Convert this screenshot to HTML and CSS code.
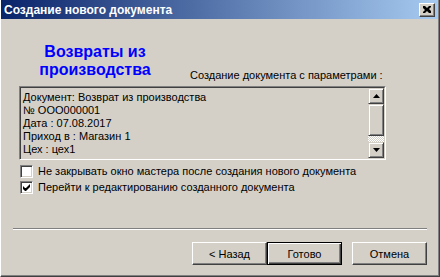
FILE: index.html
```html
<!DOCTYPE html>
<html lang="ru">
<head>
<meta charset="utf-8">
<title>Создание нового документа</title>
<link rel="stylesheet" href="styles.css">
</head>
<body>
<div class="window">
  <div class="titlebar">
    <span class="title">Создание нового документа</span>
    <span class="close-btn">
      <svg width="8" height="7" viewBox="0 0 8 7"><path d="M0 0h2l2 2 2-2h2v1l-2 2 2 2v2h-2l-2-2-2 2h-2v-1l2-2-2-2z" fill="#000"/></svg>
    </span>
  </div>
  <div class="content">
    <div class="top-row">
      <div class="heading">Возвраты из<br>производства</div>
      <div class="params-label">Создание документа с параметрами :</div>
    </div>
    <div class="memo">
      <div class="memo-text">
        <div>Документ: Возврат из производства</div>
        <div>№ ООО000001</div>
        <div>Дата : 07.08.2017</div>
        <div>Приход в : Магазин 1</div>
        <div>Цех : цех1</div>
      </div>
      <div class="scrollbar">
        <div class="sb-btn"><svg width="7" height="4" viewBox="0 0 7 4"><path d="M3.5 0L7 4H0z" fill="#000"/></svg></div>
        <div class="sb-thumb"></div>
        <div class="sb-track"></div>
        <div class="sb-btn"><svg width="7" height="4" viewBox="0 0 7 4"><path d="M0 0H7L3.5 4z" fill="#000"/></svg></div>
      </div>
    </div>
    <div class="checks">
      <label class="check-row"><span class="checkbox"></span><span>Не закрывать окно мастера после создания нового документа</span></label>
      <label class="check-row"><span class="checkbox"><svg width="9" height="9" viewBox="0 0 9 9"><path d="M1 3v3l2 2h1l4-4v-3l-4 4h-1z" fill="#000"/></svg></span><span>Перейти к редактированию созданного документа</span></label>
    </div>
    <div class="separator"></div>
    <div class="buttons">
      <button class="btn">&lt; Назад</button>
      <button class="btn btn-default">Готово</button>
      <button class="btn btn-gap">Отмена</button>
    </div>
  </div>
</div>
</body>
</html>
```
FILE: styles.css
```css
html, body {
  margin: 0;
  padding: 0;
  background: #d4d0c8;
}
body {
  font-family: "Liberation Sans", Arial, sans-serif;
  font-size: 11px;
  color: #000;
}
.window {
  width: 440px;
  height: 277px;
  box-sizing: border-box;
  background: #d4d0c8;
  border-left: 1px solid #ffffff;
  border-right: 1px solid #404040;
  border-bottom: 1px solid #404040;
  box-shadow: inset -1px -1px 0 #808080;
  overflow: hidden;
}
.titlebar {
  height: 19px;
  margin-right: 1px;
  display: flex;
  align-items: center;
  justify-content: space-between;
  padding: 0 3px 0 3px;
  background: linear-gradient(to right, #0a246a, #a6caf0);
}
.title {
  color: #fff;
  font-weight: bold;
  font-size: 12px;
  letter-spacing: 0;
}
.close-btn {
  width: 16px;
  height: 14px;
  box-sizing: border-box;
  background: #d4d0c8;
  border-top: 1px solid #fff;
  border-left: 1px solid #fff;
  border-right: 1px solid #404040;
  border-bottom: 1px solid #404040;
  box-shadow: inset -1px -1px 0 #808080;
  display: flex;
  align-items: center;
  justify-content: center;
}
.content {
  display: flex;
  flex-direction: column;
}
.top-row {
  height: 67px;
  display: flex;
  padding-left: 18px;
}
.heading {
  width: 152px;
  padding-top: 24px;
  text-align: center;
  color: #0000ff;
  font-weight: bold;
  font-size: 16px;
  line-height: 18px;
}
.params-label {
  align-self: flex-end;
  margin-left: 19px;
  margin-bottom: 4px;
  line-height: 13px;
}
.memo {
  margin-left: 18px;
  width: 367px;
  height: 74px;
  box-sizing: border-box;
  display: flex;
  border-top: 1px solid #808080;
  border-left: 1px solid #808080;
  border-right: 1px solid #fff;
  border-bottom: 1px solid #fff;
}
.memo-inner, .memo-text {
  flex: 1;
  padding: 3px 0 0 2px;
  line-height: 13px;
  border-top: 1px solid #404040;
  border-left: 1px solid #404040;
}
.scrollbar {
  width: 16px;
  display: flex;
  flex-direction: column;
  border-top: 1px solid #404040;
  border-right: 1px solid #d4d0c8;
  border-bottom: 1px solid #d4d0c8;
}
.sb-btn, .sb-thumb {
  box-sizing: border-box;
  background: #d4d0c8;
  border-top: 1px solid #d4d0c8;
  border-left: 1px solid #d4d0c8;
  border-right: 1px solid #404040;
  border-bottom: 1px solid #404040;
  box-shadow: inset 1px 1px 0 #fff, inset -1px -1px 0 #808080;
}
.sb-btn {
  height: 16px;
  display: flex;
  align-items: center;
  justify-content: center;
}
.sb-thumb {
  height: 32px;
}
.sb-track {
  flex: 1;
  background-color: #fff;
  background-image: repeating-conic-gradient(#d4d0c8 0 25%, #ffffff 0 50%);
  background-size: 2px 2px;
}
.checks {
  margin-top: 5px;
  padding-left: 19px;
  display: flex;
  flex-direction: column;
  gap: 3px;
}
.check-row {
  display: flex;
  align-items: center;
  gap: 5px;
  height: 13px;
  line-height: 13px;
}
.checkbox {
  width: 13px;
  height: 13px;
  box-sizing: border-box;
  background: #fff;
  border-top: 1px solid #808080;
  border-left: 1px solid #808080;
  border-right: 1px solid #fff;
  border-bottom: 1px solid #fff;
  box-shadow: inset 1px 1px 0 #404040, inset -1px -1px 0 #d4d0c8;
  display: flex;
  align-items: center;
  justify-content: center;
}
.separator {
  margin-top: 34px;
  margin-left: 12px;
  width: 414px;
  height: 1px;
  border-top: 1px solid #808080;
  border-bottom: 1px solid #fff;
  height: 0;
}
.buttons {
  margin-top: 12px;
  padding-left: 191px;
  display: flex;
}
.btn {
  width: 75px;
  height: 23px;
  box-sizing: border-box;
  margin: 0;
  padding: 0;
  font-family: "Liberation Sans", Arial, sans-serif;
  font-size: 11px;
  color: #000;
  background: #d4d0c8;
  border-top: 1px solid #fff;
  border-left: 1px solid #fff;
  border-right: 1px solid #404040;
  border-bottom: 1px solid #404040;
  box-shadow: inset -1px -1px 0 #808080;
}
.btn-default {
  border: 1px solid #000;
  box-shadow: inset 1px 1px 0 #fff, inset -1px -1px 0 #404040, inset -2px -2px 0 #808080;
}
.btn-gap {
  margin-left: 10px;
}
```
